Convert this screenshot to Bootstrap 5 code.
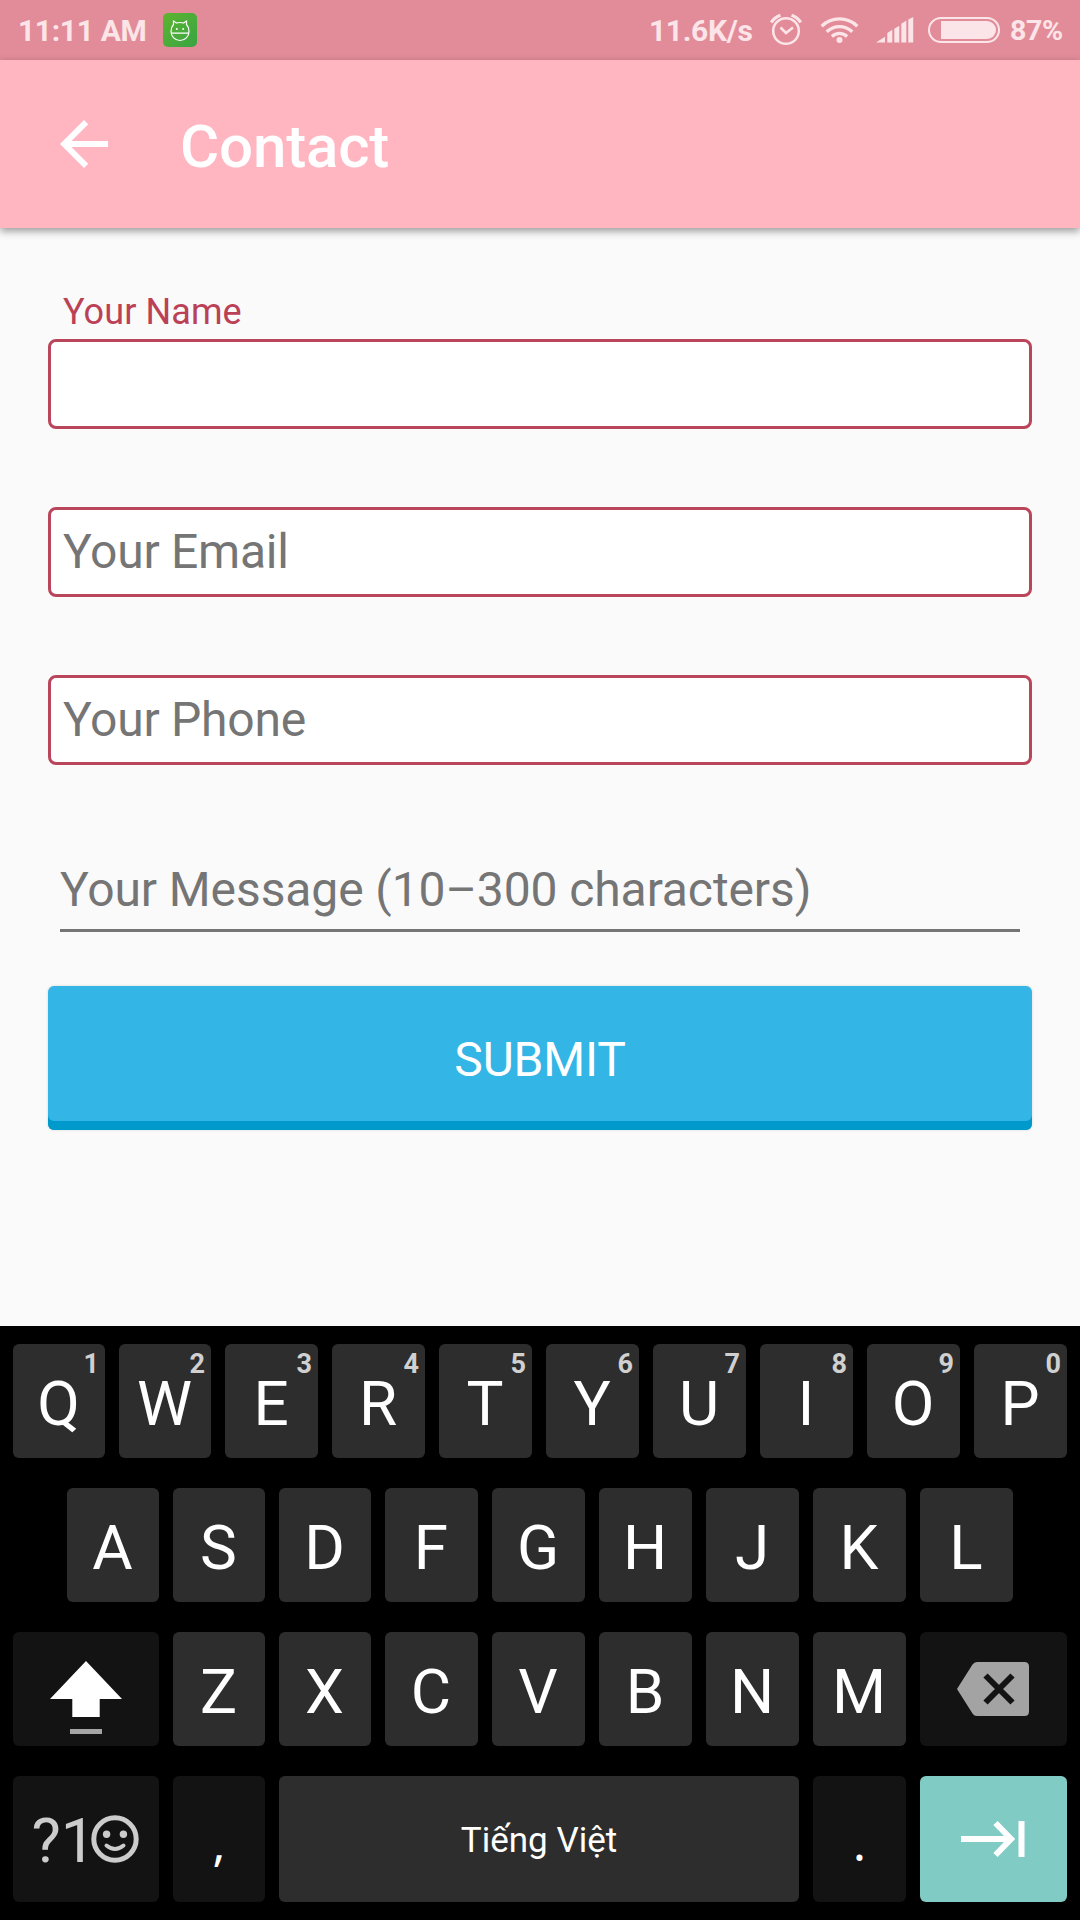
<!DOCTYPE html>
<html lang="en">
<head>
<meta charset="utf-8">
<meta name="viewport" content="width=device-width, initial-scale=1">
<title>Contact</title>
<link href="https://cdn.jsdelivr.net/npm/bootstrap@5.3.0/dist/css/bootstrap.min.css" rel="stylesheet">
<style>
body{font-family:Roboto,"Noto Sans",sans-serif;background:#fafafa;width:1080px;height:1920px;overflow:hidden}
svg{display:block;flex:none}
.statusbar{height:60px;background:#e38c99;color:#fbe5e8;font-size:30px;font-weight:700;line-height:60px;padding:0 19px 0 18px;letter-spacing:-.35px}
.statusbar span{padding-top:1px}
.statusbar .clock{width:145px}
.statusbar .speed{width:121px}
.statusbar .percent{width:51px;margin-left:10px;font-size:28.5px}
.appbar{height:168px;background:#ffb6c1;padding:0 48px;box-shadow:0 3px 8px rgba(0,0,0,.4);z-index:1}
.appbar h1{font-size:60px;font-weight:500;line-height:70px;margin:5px 0 0 60px;letter-spacing:-.15px}
.contact-form{padding:63px 48px 0}
.field-label{font-size:36px;line-height:42px;color:#ba4156;padding-left:15px;margin-bottom:6px;letter-spacing:.1px}
.field-box{height:90px;border:3px solid #b9465a;border-radius:8px;background:#fff;padding:0 12px 2px;font-size:48px;line-height:56px;margin-bottom:78px;letter-spacing:-.25px}
.field-line{height:89px;width:960px;margin:0 12px 54px;border:0;border-bottom:3px solid #757575;border-radius:0;background:transparent;padding:7px 0 0;font-size:48px;line-height:56px;letter-spacing:-.1px}
.form-control::placeholder{color:#757575;opacity:1}
.submit-btn{height:144px;border:0;border-radius:6px;background:#33b5e5;color:#fff;font-size:48px;line-height:56px;padding:4px 0 0;box-shadow:inset 0 -9px #09c,0 0 3px rgba(0,0,0,.15);letter-spacing:-.2px}
.submit-btn:hover{background:#33b5e5;color:#fff}
.keyboard{height:594px;background:#000;padding:18px 13px;gap:30px;color:#fff}
.krow{display:grid;gap:14px;height:114px}
.krow.top-row{grid-template-columns:repeat(2,92px) repeat(8,93px)}
.krow.inset-row{padding:0 54px;grid-template-columns:repeat(3,92px) repeat(6,93px)}
.krow.shift-row{grid-template-columns:146px repeat(2,92px) repeat(5,93px) 147px}
.krow.bottom-row{height:126px;grid-template-columns:146px 92px 520px 93px 147px}
.key{min-width:0;border:0;border-radius:6px;background:#2d2d2d;color:#fff;font-size:62px;line-height:72px;padding:5px 1px 0 0;position:relative;display:flex;align-items:center;justify-content:center}
.key-fn{background:#131313;padding:0}
.key-space{font-size:35px;line-height:42px;padding:3px 0 0}
.key-symbols{color:#ccc;padding-right:2px}
.key-symbols span{padding-top:3px}
.key-punct{font-family:"Noto Sans",sans-serif;font-size:48px;padding-top:7px}
.key-next{background:#80cbc4}
.key-hint{position:absolute;top:2px;right:6px;font-size:27px;line-height:36px;font-weight:700;color:#d0d0d0}
</style>
<script src="https://cdn.jsdelivr.net/npm/bootstrap@5.3.0/dist/js/bootstrap.bundle.min.js"></script>
</head>
<body class="d-flex flex-column">
<div class="statusbar d-flex align-items-center">
  <span class="clock text-nowrap">11:11 AM</span>
  <svg width="34" height="34" viewBox="0 0 34 34"><defs><linearGradient id="leaf" x2="1" y2="1"><stop stop-color="#5eb430"/><stop offset="1" stop-color="#38a443"/></linearGradient></defs><rect width="34" height="34" rx="5" fill="url(#leaf)"/><path d="M8 18.500c0-3.500 1-5.500 2.500-7L10.500 8l3 2q3.500-1 7 0l3-2v3.500c1.500 1.500 2.500 3.500 2.500 7a9 9 0 0 1-18 0zM8.500 20.200h17" fill="none" stroke="#fff" stroke-width="1.200"/><circle cx="13.800" cy="16" r="1" fill="#fff"/><circle cx="20.200" cy="16" r="1" fill="#fff"/></svg>
  <span class="speed text-nowrap ms-auto">11.6K/s</span>
  <svg width="32" height="34" viewBox="0 0 32 34" fill="none" stroke="#fbe5e8"><circle cx="16" cy="18" r="12.800" stroke-width="2.500"/><path d="M10.500 14.500l5.500 5.500 7-5.500" stroke-width="2.600"/><path d="M1.300 9.500Q4.500 4 10.500 2.200M30.700 9.500Q27.500 4 21.500 2.200" stroke-width="3.200"/></svg>
  <svg style="margin-left:17px" width="42" height="34" viewBox="-1.500 0 42 34" fill="none" stroke="#fbe5e8" stroke-width="3.300"><path d="M1.200 13.200a25.500 25.500 0 0 1 35.600 0M6.200 18.700a18.500 18.500 0 0 1 25.600 0M11.400 23.500a11 11 0 0 1 15.200 0"/><circle cx="19" cy="27" r="3" fill="#fbe5e8" stroke="none"/></svg>
  <svg width="38" height="26" viewBox="0 0 38 26" style="margin-left:15px" fill="#fbe5e8"><path d="M0 25.500l9-5.800v5.800zM11.300 25.500v-9.500l5-3.200v12.700zM18.300 25.500v-13.800l5-3v16.800zM25.300 25.500V6.700l5-3.200v22zM32.300 25.500V2.500L37.200 0v25.500z"/></svg>
  <svg width="72" height="26" viewBox="0 0 72 26" style="margin-left:14px"><rect x="1" y="1" width="70" height="24" rx="12" fill="none" stroke="#fbe5e8" stroke-width="2"/><path d="M13 4h46a9 9 0 0 1 0 18H13z" fill="#fbe5e8"/></svg>
  <span class="percent text-nowrap">87%</span>
</div>
<header class="appbar d-flex align-items-center text-white">
  <svg width="72" height="72" viewBox="0 0 24 24" fill="#fff"><path d="M20 11H7.830l5.590-5.590L12 4l-8 8 8 8 1.410-1.410L7.830 13H20z"/></svg>
  <h1>Contact</h1>
</header>
<form class="contact-form flex-grow-1">
  <label class="field-label d-block" for="name">Your Name</label>
  <input id="name" type="text" class="form-control field-box">
  <input type="email" class="form-control field-box" placeholder="Your Email">
  <input type="tel" class="form-control field-box" placeholder="Your Phone">
  <input type="text" class="form-control field-line" placeholder="Your Message (10–300 characters)">
  <button type="button" class="btn submit-btn w-100">SUBMIT</button>
</form>
<div class="keyboard d-flex flex-column">
  <div class="krow top-row">
    <button class="key">Q<span class="key-hint">1</span></button>
    <button class="key">W<span class="key-hint">2</span></button>
    <button class="key">E<span class="key-hint">3</span></button>
    <button class="key">R<span class="key-hint">4</span></button>
    <button class="key">T<span class="key-hint">5</span></button>
    <button class="key">Y<span class="key-hint">6</span></button>
    <button class="key">U<span class="key-hint">7</span></button>
    <button class="key">I<span class="key-hint">8</span></button>
    <button class="key">O<span class="key-hint">9</span></button>
    <button class="key">P<span class="key-hint">0</span></button>
  </div>
  <div class="krow inset-row">
    <button class="key">A</button><button class="key">S</button><button class="key">D</button><button class="key">F</button><button class="key">G</button><button class="key">H</button><button class="key">J</button><button class="key">K</button><button class="key">L</button>
  </div>
  <div class="krow shift-row">
    <button class="key key-fn" aria-label="Shift"><svg width="146" height="114" viewBox="0 0 146 114"><path d="M73 29l36 38H86.700v18H59.300V67H37z" fill="#fff"/><path d="M57 97h32v5H57z" fill="#a5a5a5"/></svg></button>
    <button class="key">Z</button><button class="key">X</button><button class="key">C</button><button class="key">V</button><button class="key">B</button><button class="key">N</button><button class="key">M</button>
    <button class="key key-fn" aria-label="Delete"><svg width="147" height="114" viewBox="0 0 147 114"><path d="M37 57l15.500-24.500Q54 30 57 30h47.500q4.500 0 4.500 4.500v45q0 4.500-4.500 4.500H57q-3 0-4.500-2.500z" fill="#a3a3a3"/><path d="M65.500 43.500l27 27m0-27l-27 27" stroke="#131313" stroke-width="6"/></svg></button>
  </div>
  <div class="krow bottom-row">
    <button class="key key-fn key-symbols"><span>?1</span><svg width="48" height="48" viewBox="0 0 48 48" style="margin-left:-5px" fill="none" stroke="#ccc"><circle cx="24" cy="24" r="21.200" stroke-width="5"/><g fill="#ccc" stroke="none"><circle cx="15.600" cy="19.200" r="3.700"/><circle cx="32.400" cy="19.200" r="3.700"/></g><path d="M15.500 30.500q8.500 7 17 0" stroke-width="4" stroke-linecap="round"/></svg></button>
    <button class="key key-fn key-punct">,</button>
    <button class="key key-space">Tiếng Việt</button>
    <button class="key key-fn key-punct">.</button>
    <button class="key key-fn key-next" aria-label="Next"><svg width="147" height="126" viewBox="0 0 147 126" fill="none" stroke="#fff" stroke-width="6"><path d="M41 63h50M75.500 47l15.500 16-15.500 16M101.500 45v36"/></svg></button>
  </div>
</div>
</body>
</html>
